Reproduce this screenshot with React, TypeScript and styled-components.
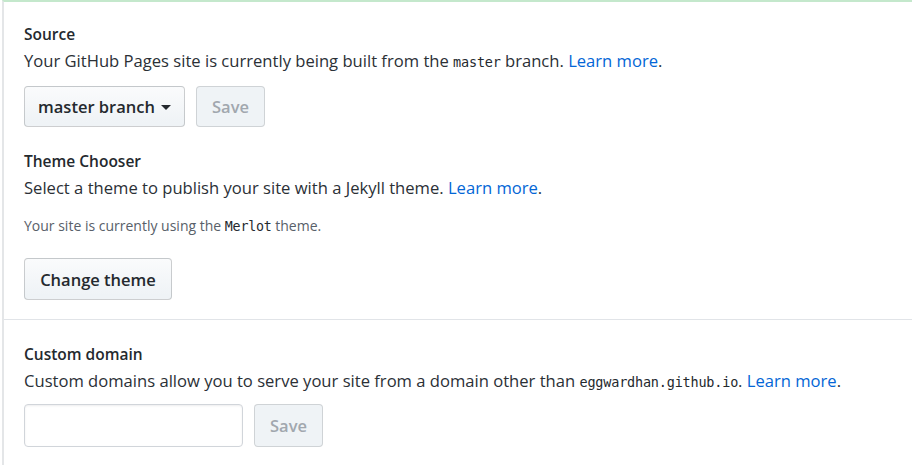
import React from "react";
import styled, { createGlobalStyle } from "styled-components";

const Global = createGlobalStyle`
  html, body { margin: 0; padding: 0; background: #fff; }
  body { font-family: "Open Sans", "Noto Sans", sans-serif; color: #24292e; }
`;

const Frame = styled.div`
  margin-left: 2px;
  border-left: 2px solid #e4e6e8;
  border-top: 2px solid #c4e8cc;
  min-height: 463px;
  box-sizing: border-box;
`;

const Section = styled.section<{ $bordered?: boolean }>`
  padding: 19px 20px 19px 20px;
  border-bottom: ${(p) => (p.$bordered ? "1px solid #e1e4e8" : "none")};
`;

const Heading = styled.h3<{ $mt?: number }>`
  margin: ${(p) => p.$mt ?? 0}px 0 0;
  font-size: 15.5px;
  font-weight: 600;
  line-height: 27px;
  color: #24292e;
`;

const Desc = styled.p`
  margin: 0;
  font-size: 16.6px;
  line-height: 26px;
  color: #2b3036;
`;

const Note = styled.p`
  margin: 15px 0 0;
  font-size: 14px;
  line-height: 20px;
  color: #586069;
`;

const Code = styled.code<{ $size?: number }>`
  font-family: "DejaVu Sans Mono", "Liberation Mono", monospace;
  font-size: ${(p) => p.$size ?? 13.5}px;
  color: #24292e;
  letter-spacing: -0.2px;
`;

const Link = styled.a`
  color: #0366d6;
  text-decoration: none;
`;

const Row = styled.div<{ $mt?: number }>`
  display: flex;
  align-items: center;
  gap: 11px;
  margin-top: ${(p) => p.$mt ?? 11}px;
`;

const Button = styled.button<{ $w: number; $h?: number }>`
  width: ${(p) => p.$w}px;
  height: ${(p) => p.$h ?? 41}px;
  box-sizing: border-box;
  padding: 0;
  border: 1px solid rgba(27, 31, 35, 0.2);
  border-radius: 4px;
  background: linear-gradient(#fafbfc, #eff3f6 90%);
  font-family: inherit;
  font-size: 16.5px;
  font-weight: 600;
  color: #24292e;
  display: inline-flex;
  align-items: center;
  justify-content: center;
  gap: 6px;
  &:disabled {
    background: #eff3f6;
    color: #a1a7ae;
    border-color: rgba(27, 31, 35, 0.15);
  }
`;

const Caret = styled.span`
  display: inline-block;
  width: 0;
  height: 0;
  border-left: 5px solid transparent;
  border-right: 5px solid transparent;
  border-top: 5px solid #24292e;
  margin-top: 2px;
`;

const Input = styled.input`
  width: 219px;
  height: 43px;
  box-sizing: border-box;
  border: 1px solid #d1d5da;
  border-radius: 4px;
  box-shadow: inset 0 1px 2px rgba(27, 31, 35, 0.075);
  font-size: 16px;
  padding: 0 8px;
`;

export default function App() {
  return (
    <>
      <Global />
      <Frame>
        <Section $bordered>
          <Heading>Source</Heading>
          <Desc>
            Your GitHub Pages site is currently being built from the <Code>master</Code> branch.{" "}
            <Link href="#">Learn more</Link>.
          </Desc>
          <Row>
            <Button $w={161}>
              master branch <Caret />
            </Button>
            <Button $w={69} disabled>
              Save
            </Button>
          </Row>
          <Heading $mt={21}>Theme Chooser</Heading>
          <Desc>
            Select a theme to publish your site with a Jekyll theme. <Link href="#">Learn more</Link>.
          </Desc>
          <Note>
            Your site is currently using the <Code $size={13.3}>Merlot</Code> theme.
          </Note>
          <Row $mt={21}>
            <Button $w={148} $h={42}>
              Change theme
            </Button>
          </Row>
        </Section>
        <Section>
          <Heading $mt={2}>Custom domain</Heading>
          <Desc>
            Custom domains allow you to serve your site from a domain other than{" "}
            <Code>eggwardhan.github.io</Code>. <Link href="#">Learn more</Link>.
          </Desc>
          <Row $mt={9}>
            <Input type="text" />
            <Button $w={69} $h={43} disabled>
              Save
            </Button>
          </Row>
        </Section>
      </Frame>
    </>
  );
}
